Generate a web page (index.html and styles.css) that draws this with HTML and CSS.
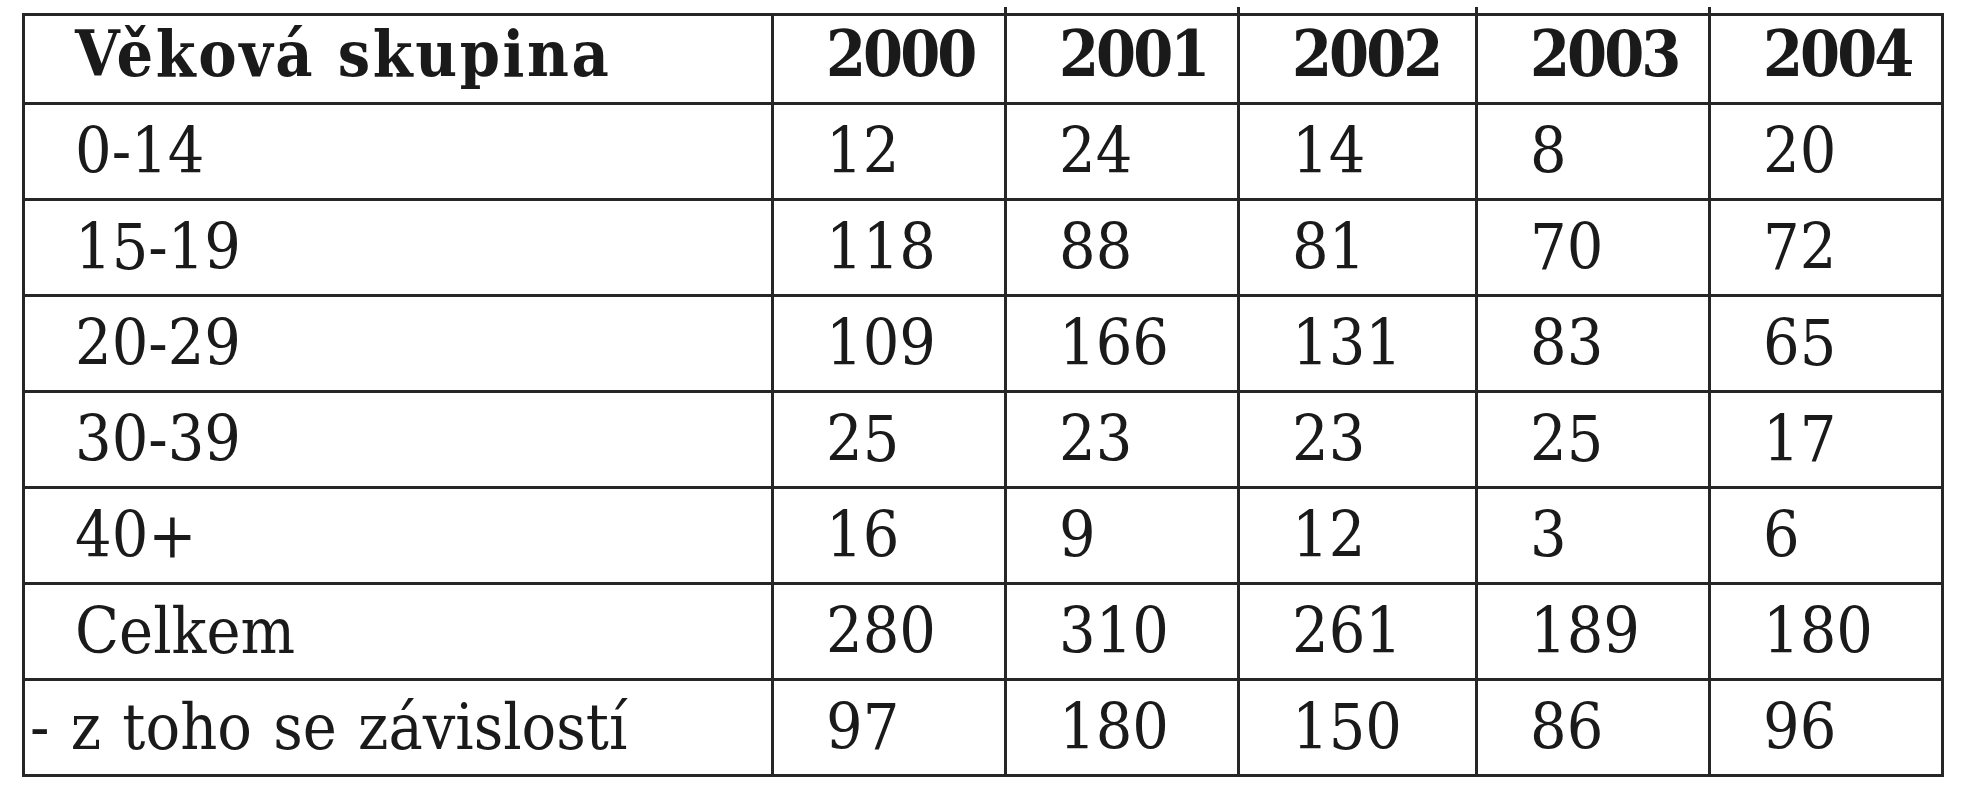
FILE: index.html
```html
<!DOCTYPE html>
<html lang="cs">
<head>
<meta charset="utf-8">
<title>Věková skupina</title>
<link rel="stylesheet" href="styles.css">
</head>
<body>
<div class="page">
<table class="data">
  <colgroup>
    <col class="c-label">
    <col class="c-year">
    <col class="c-year">
    <col class="c-year3">
    <col class="c-year">
    <col class="c-year">
  </colgroup>
  <thead>
    <tr>
      <th class="label">Věková skupina</th>
      <th class="tick">2000</th>
      <th class="tick">2001</th>
      <th class="tick">2002</th>
      <th class="tick">2003</th>
      <th>2004</th>
    </tr>
  </thead>
  <tbody>
    <tr><td class="label">0-14</td><td>12</td><td>24</td><td>14</td><td>8</td><td>20</td></tr>
    <tr><td class="label">15-19</td><td>118</td><td>88</td><td>81</td><td>70</td><td>72</td></tr>
    <tr><td class="label">20-29</td><td>109</td><td>166</td><td>131</td><td>83</td><td>65</td></tr>
    <tr><td class="label">30-39</td><td>25</td><td>23</td><td>23</td><td>25</td><td>17</td></tr>
    <tr><td class="label">40+</td><td>16</td><td>9</td><td>12</td><td>3</td><td>6</td></tr>
    <tr><td class="label">Celkem</td><td>280</td><td>310</td><td>261</td><td>189</td><td>180</td></tr>
    <tr><td class="label dep">- z toho se závislostí</td><td>97</td><td>180</td><td>150</td><td>86</td><td>96</td></tr>
  </tbody>
</table>
</div>
</body>
</html>
```

FILE: styles.css
```css
html, body {
  margin: 0;
  padding: 0;
  background: #ffffff;
}

.page {
  padding: 13px 0 0 22px;
}

.data {
  border-collapse: collapse;
  table-layout: fixed;
  width: 1920px;
  font-family: "DejaVu Serif Condensed", "DejaVu Serif", serif;
  font-stretch: condensed;
  color: #1a1a1a;
}

.c-label { width: 749px; }
.c-year { width: 233px; }
.c-year3 { width: 238px; }

.data th,
.data td {
  border: 3px solid #262626;
  text-align: left;
  vertical-align: top;
  padding: 0 0 0 52px;
  font-size: 64px;
  line-height: 64px;
  white-space: nowrap;
  box-sizing: border-box;
}

.data th {
  position: relative;
  height: 89px;
  padding-top: 6px;
  font-weight: bold;
  letter-spacing: -3px;
}

.data th.label {
  letter-spacing: 2.6px;
}

.data th.tick::after {
  content: "";
  position: absolute;
  right: -3px;
  top: -9px;
  width: 3px;
  height: 7px;
  background: #262626;
}

.data td {
  height: 96px;
  padding-top: 14px;
}

.data .label {
  padding-left: 50px;
}

.data td.dep {
  padding-left: 5px;
  word-spacing: 3px;
}
```
